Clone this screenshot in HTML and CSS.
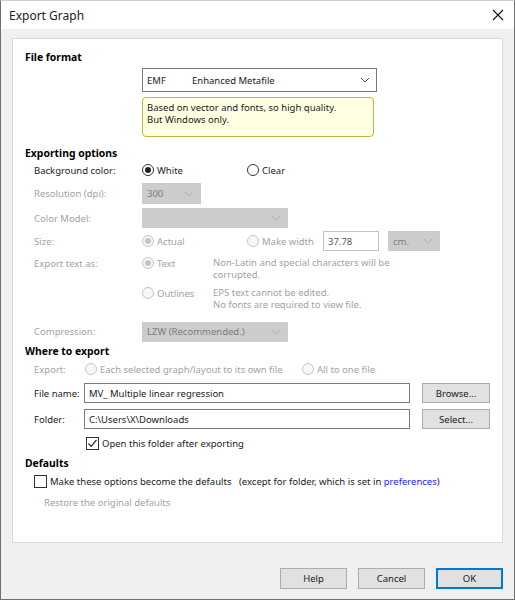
FILE: index.html
```html
<!DOCTYPE html>
<html lang="en">
<head>
    <meta charset="UTF-8">
    <title>Export Graph</title>
    <link rel="stylesheet" href="styles.css">
</head>
<body>
    <div class="window">
        <div class="titlebar">
            <span class="title">Export Graph</span>
            <svg class="close" width="12" height="12" viewBox="0 0 12 12">
                <path d="M1 1 L11 11 M11 1 L1 11" stroke="#111" stroke-width="1.1" fill="none"/>
            </svg>
        </div>
        <div class="body">
            <div class="panel">
                <h2>File format</h2>
                <div class="format">
                    <div class="select format-select">
                        <span class="fmt-code">EMF</span>
                        <span>Enhanced Metafile</span>
                        <svg class="chev" width="10" height="6" viewBox="0 0 10 6"><path d="M1 1 L5 5 L9 1" stroke="#555" fill="none"/></svg>
                    </div>
                    <div class="note">Based on vector and fonts, so high quality.<br>But Windows only.</div>
                </div>

                <h2 class="h-export">Exporting options</h2>
                <div class="row row-bg">
                    <span class="label">Background color:</span>
                    <label class="opt opt-white"><span class="radio checked"></span>White</label>
                    <label class="opt"><span class="radio"></span>Clear</label>
                </div>
                <div class="row row-res off">
                    <span class="label">Resolution (dpi):</span>
                    <div class="select dis sel-res">
                        <span>300</span>
                        <svg class="chev" width="10" height="6" viewBox="0 0 10 6"><path d="M1 1 L5 5 L9 1" stroke="#b0b0b0" fill="none"/></svg>
                    </div>
                </div>
                <div class="row row-color off">
                    <span class="label">Color Model:</span>
                    <div class="select dis sel-wide">
                        <span></span>
                        <svg class="chev" width="10" height="6" viewBox="0 0 10 6"><path d="M1 1 L5 5 L9 1" stroke="#b0b0b0" fill="none"/></svg>
                    </div>
                </div>
                <div class="row row-size off">
                    <span class="label">Size:</span>
                    <label class="opt opt-white"><span class="radio checked dim"></span>Actual</label>
                    <label class="opt opt-make"><span class="radio dim"></span>Make width</label>
                    <div class="input input-width">37.78</div>
                    <div class="select dis sel-unit">
                        <span>cm.</span>
                        <svg class="chev" width="10" height="6" viewBox="0 0 10 6"><path d="M1 1 L5 5 L9 1" stroke="#b0b0b0" fill="none"/></svg>
                    </div>
                </div>
                <div class="row row-text off">
                    <span class="label">Export text as:</span>
                    <label class="opt opt-text"><span class="radio checked dim"></span>Text</label>
                    <p class="desc">Non-Latin and special characters will be<br>corrupted.</p>
                </div>
                <div class="row row-outline off">
                    <span class="label"></span>
                    <label class="opt opt-text"><span class="radio dim"></span>Outlines</label>
                    <p class="desc">EPS text cannot be edited.<br>No fonts are required to view file.</p>
                </div>
                <div class="row row-comp off">
                    <span class="label">Compression:</span>
                    <div class="select dis sel-wide">
                        <span>LZW (Recommended.)</span>
                        <svg class="chev" width="10" height="6" viewBox="0 0 10 6"><path d="M1 1 L5 5 L9 1" stroke="#b0b0b0" fill="none"/></svg>
                    </div>
                </div>

                <h2 class="h-where">Where to export</h2>
                <div class="row short row-exp off">
                    <span class="label">Export:</span>
                    <label class="opt opt-each"><span class="radio dim"></span>Each selected graph/layout to its own file</label>
                    <label class="opt"><span class="radio dim"></span>All to one file</label>
                </div>
                <div class="row short row-file">
                    <span class="label">File name:</span>
                    <div class="input input-path">MV_ Multiple linear regression</div>
                    <button class="btn">Browse...</button>
                </div>
                <div class="row short row-folder">
                    <span class="label">Folder:</span>
                    <div class="input input-path">C:\Users\X\Downloads</div>
                    <button class="btn">Select...</button>
                </div>
                <div class="row short row-open">
                    <span class="label"></span>
                    <label class="opt"><span class="check checked">
                        <svg width="11" height="11" viewBox="0 0 11 11"><path d="M1.5 5.5 L4.2 8.3 L9.5 1.8" stroke="#222" stroke-width="1.2" fill="none"/></svg>
                    </span>Open this folder after exporting</label>
                </div>

                <h2 class="h-defaults">Defaults</h2>
                <div class="row-make">
                    <label class="opt"><span class="check"></span>Make these options become the defaults</label>
                    <span class="except">(except for folder, which is set in <a href="#">preferences</a>)</span>
                </div>
                <div class="restore">Restore the original defaults</div>
            </div>
            <div class="buttons">
                <button class="btn dlg">Help</button>
                <button class="btn dlg">Cancel</button>
                <button class="btn dlg default">OK</button>
            </div>
        </div>
    </div>
</body>
</html>
```

FILE: styles.css
```css
:root {
    --text: #1a1a1a;
    --dim: #a2a2a2;
    --panel-border: #dadada;
    --dis-bg: #cccccc;
}

* {
    box-sizing: border-box;
}

body {
    margin: 0;
    font-family: "Noto Sans", sans-serif;
    font-size: 9.5px;
    color: var(--text);
    white-space: nowrap;
}

.window {
    width: 515px;
    height: 600px;
    border: 1px solid #6f6f6f;
    border-top-color: #cfcfcf;
    display: flex;
    flex-direction: column;
}

.titlebar {
    height: 28px;
    background: #fff;
    display: flex;
    align-items: center;
    justify-content: space-between;
    padding: 0 10px 0 8px;
}

.title {
    font-size: 12px;
    color: #222;
}

.body {
    flex: 1;
    background: #f0f0f0;
    padding: 9px 11px 0 11px;
}

.panel {
    height: 505px;
    background: #fff;
    border: 1px solid var(--panel-border);
    padding: 10px 12px 0 12px;
}

h2 {
    margin: 0;
    font-size: 10.4px;
    font-weight: bold;
    height: 16px;
    line-height: 16px;
    color: #000;
}

/* File format */
.format {
    margin-left: 117px;
}

.select {
    display: flex;
    align-items: center;
    border: 1px solid #7a7a7a;
    background: #fff;
    padding: 0 6px 0 4px;
}

.select .chev {
    margin-left: auto;
}

.format-select {
    margin-top: 3px;
    width: 235px;
    height: 24px;
}

.fmt-code {
    width: 45px;
}

.note {
    margin-top: 5px;
    width: 232px;
    height: 40px;
    background: #ffffe1;
    border: 1px solid #c4b24c;
    border-radius: 4px;
    padding: 4px 4px;
    line-height: 12px;
}

/* Option rows */
.h-export { margin-top: 8px; }
.h-where { margin-top: 1px; }
.h-defaults { margin-top: 4px; }

.row {
    display: flex;
    align-items: center;
    padding-left: 9px;
}

.row .label {
    width: 108px;
    flex: none;
}

.row.short .label {
    width: 50px;
}

.off,
.off .desc {
    color: var(--dim);
}

.opt {
    display: flex;
    align-items: center;
    gap: 3px;
}

.opt-white { width: 105px; }
.opt-make { width: 76px; }
.opt-text { width: 71px; }
.opt-each { width: 217px; margin-left: 1px; }

.radio {
    width: 12px;
    height: 12px;
    border: 1px solid #333;
    border-radius: 50%;
    background: #fff;
    display: flex;
    align-items: center;
    justify-content: center;
    flex: none;
}

.radio.checked::after {
    content: '';
    width: 6px;
    height: 6px;
    border-radius: 50%;
    background: #222;
}

.radio.dim {
    border-color: #c4c4c4;
    background: #f7f7f7;
}

.radio.dim.checked::after {
    background: #c4c4c4;
}

.check {
    width: 13px;
    height: 13px;
    border: 1px solid #333;
    background: #fff;
    display: flex;
    align-items: center;
    justify-content: center;
    flex: none;
}

.select.dis {
    border-color: var(--dis-bg);
    background: var(--dis-bg);
    color: #7d7d7d;
}

.row-bg { height: 18px; }
.row-res { height: 21px; margin-top: 4px; }
.row-color { height: 20px; margin-top: 4px; }
.row-size { height: 20px; margin-top: 3px; }
.row-text { height: 24px; margin-top: 6px; align-items: flex-start; }
.row-outline { height: 24px; margin-top: 6px; align-items: flex-start; }
.row-comp { height: 21px; margin-top: 10px; }
.row-exp { height: 16px; margin-top: 2px; }
.row-file { height: 20px; margin-top: 6px; }
.row-folder { height: 20px; margin-top: 6px; }
.row-open { height: 16px; margin-top: 6px; padding-left: 11px; }

.sel-res { width: 59px; height: 21px; }
.sel-wide { width: 146px; height: 20px; }
.sel-unit { width: 52px; height: 20px; margin-left: 9px; }

.row-text .opt,
.row-outline .opt {
    height: 12px;
}

.desc {
    margin: 0;
    line-height: 12px;
}

.input {
    height: 20px;
    border: 1px solid #7a7a7a;
    background: #fff;
    display: flex;
    align-items: center;
    padding: 0 4px;
    color: var(--text);
}

.off .input {
    border-color: #c0c0c0;
    color: #555;
}

.input-width { width: 56px; }
.input-path { width: 332px; }

.btn {
    font: inherit;
    color: var(--text);
    background: #e1e1e1;
    border: 1px solid #adadad;
    height: 20px;
    padding: 0;
}

.row .btn {
    width: 69px;
    margin-left: 12px;
}

.row-make {
    display: flex;
    align-items: center;
    height: 16px;
    margin-top: 2px;
    padding-left: 9px;
}

.row-make .opt {
    width: 205px;
}

.except a {
    color: #1a1aff;
    text-decoration: none;
}

.restore {
    margin-top: 6px;
    height: 16px;
    line-height: 16px;
    padding-left: 19px;
    color: var(--dim);
}

.buttons {
    display: flex;
    justify-content: flex-end;
    gap: 11px;
    margin-top: 25px;
}

.btn.dlg {
    width: 67px;
    height: 21px;
}

.btn.default {
    border: 2px solid #0078d7;
}
```
